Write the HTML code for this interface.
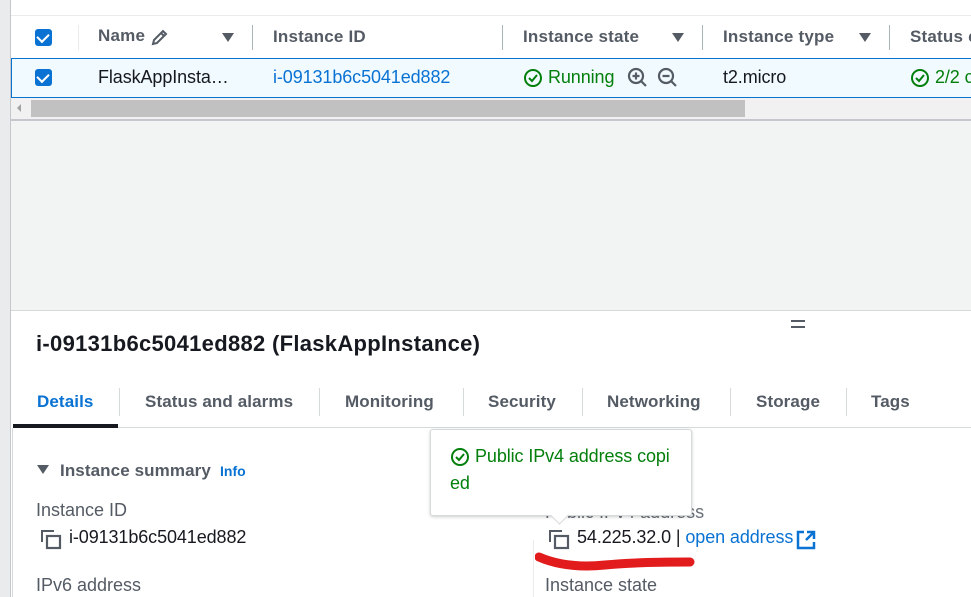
<!DOCTYPE html>
<html><head><style>
*{margin:0;padding:0;box-sizing:border-box}
body{width:971px;height:597px;overflow:hidden;background:#fff;font-family:"Liberation Sans",sans-serif;position:relative;color:#16191f}
.a{position:absolute;white-space:nowrap}
.t{font-size:18px;letter-spacing:-0.1px}
.hd{font-weight:bold;color:#545b64;font-size:17px;letter-spacing:0.2px}
.sep{position:absolute;width:1px;background:#aab7b8}
.cb{position:absolute;width:17px;height:17px;background:#0972d3;border-radius:3px}
.cb:after{content:"";position:absolute;left:4px;top:2px;width:6px;height:9px;border:solid #fff;border-width:0 2.5px 2.5px 0;transform:rotate(45deg)}
.tri{position:absolute;width:0;height:0;border-left:6px solid transparent;border-right:6px solid transparent;border-top:9px solid #545b64}
.tab{position:absolute;top:392px;font-size:17px;font-weight:bold;color:#545b64;letter-spacing:0.1px}
.tsep{position:absolute;top:388px;height:28px;width:1px;background:#d5dbdb}
.lbl{font-size:18px;color:#545b64}
</style></head><body>
<div class="a" style="left:0;top:0;width:10px;height:597px;background:#e9ebed"></div>
<div class="a" style="left:10px;top:0;width:1px;height:597px;background:#c6c6cd"></div>
<div class="a" style="left:11px;top:15px;width:960px;height:1px;background:#e9ebed"></div>
<div class="cb" style="left:35px;top:29px"></div>
<div class="sep" style="left:78px;top:25px;height:25px;background:#e9ebed"></div>
<div class="a hd" style="left:98px;top:26px">Name</div>
<svg class="a" style="left:150px;top:27px" width="20" height="20" viewBox="0 0 20 20"><path d="M3 17l1-4L13 4l3 3-9 9z M11 6l3 3" fill="none" stroke="#545b64" stroke-width="2"/></svg>
<div class="tri" style="left:222px;top:33px"></div>
<div class="sep" style="left:252px;top:25px;height:25px"></div>
<div class="a hd" style="left:273px;top:27px">Instance ID</div>
<div class="sep" style="left:502px;top:25px;height:25px"></div>
<div class="a hd" style="left:523px;top:27px">Instance state</div>
<div class="tri" style="left:672px;top:33px"></div>
<div class="sep" style="left:702px;top:25px;height:25px"></div>
<div class="a hd" style="left:723px;top:27px">Instance type</div>
<div class="tri" style="left:859px;top:33px"></div>
<div class="sep" style="left:889px;top:25px;height:25px"></div>
<div class="a hd" style="left:910px;top:27px">Status c</div>
<div class="a" style="left:11px;top:58px;width:960px;height:40px;background:#f1faff;border:1px solid #0972d3;border-right:none"></div>
<div class="cb" style="left:35px;top:69px"></div>
<div class="a t" style="left:98px;top:67px">FlaskAppInsta…</div>
<div class="a t" style="left:273px;top:67px;color:#0972d3">i-09131b6c5041ed882</div>
<svg class="a" style="left:523px;top:68px" width="20" height="20" viewBox="0 0 20 20"><circle cx="10" cy="10" r="8" fill="none" stroke="#037f0c" stroke-width="2"/><path d="M6 10l3 3 5-6" fill="none" stroke="#037f0c" stroke-width="2"/></svg>
<div class="a t" style="left:548px;top:67px;color:#037f0c">Running</div>
<svg class="a" style="left:627px;top:67px" width="22" height="22" viewBox="0 0 22 22"><circle cx="9" cy="9" r="7" fill="none" stroke="#545b64" stroke-width="2.2"/><path d="M14 14l5 5M9 5.5v7M5.5 9h7" stroke="#545b64" stroke-width="2.2"/></svg>
<svg class="a" style="left:657px;top:67px" width="22" height="22" viewBox="0 0 22 22"><circle cx="9" cy="9" r="7" fill="none" stroke="#545b64" stroke-width="2.2"/><path d="M14 14l5 5M5.5 9h7" stroke="#545b64" stroke-width="2.2"/></svg>
<div class="a t" style="left:723px;top:67px">t2.micro</div>
<svg class="a" style="left:910px;top:68px" width="20" height="20" viewBox="0 0 20 20"><circle cx="10" cy="10" r="8" fill="none" stroke="#037f0c" stroke-width="2"/><path d="M6 10l3 3 5-6" fill="none" stroke="#037f0c" stroke-width="2"/></svg>
<div class="a t" style="left:935px;top:67px;color:#037f0c">2/2 c</div>
<div class="a" style="left:11px;top:98px;width:960px;height:21px;background:#f1f1f1"></div>
<div class="a" style="left:17px;top:104px;width:0;height:0;border-top:4px solid transparent;border-bottom:4px solid transparent;border-right:4px solid #a3a3a3"></div>
<div class="a" style="left:31px;top:100px;width:714px;height:17px;background:#c1c1c1"></div>
<div class="a" style="left:11px;top:119px;width:960px;height:2px;background:#c6c6cd"></div>
<div class="a" style="left:11px;top:121px;width:960px;height:189px;background:#f2f3f3"></div>
<div class="a" style="left:11px;top:310px;width:960px;height:1px;background:#d5dbdb"></div>
<div class="a" style="left:791px;top:320px;width:14px;height:2px;background:#545b64"></div>
<div class="a" style="left:791px;top:326px;width:14px;height:2px;background:#545b64"></div>
<div class="a" style="left:36px;top:331px;font-size:22px;font-weight:bold;letter-spacing:0.3px">i-09131b6c5041ed882 (FlaskAppInstance)</div>
<div class="tab" style="left:37px;color:#0972d3">Details</div>
<div class="tsep" style="left:119px"></div>
<div class="tab" style="left:145px">Status and alarms</div>
<div class="tsep" style="left:319px"></div>
<div class="tab" style="left:345px">Monitoring</div>
<div class="tsep" style="left:463px"></div>
<div class="tab" style="left:488px">Security</div>
<div class="tsep" style="left:582px"></div>
<div class="tab" style="left:607px">Networking</div>
<div class="tsep" style="left:730px"></div>
<div class="tab" style="left:756px">Storage</div>
<div class="tsep" style="left:846px"></div>
<div class="tab" style="left:871px">Tags</div>
<div class="a" style="left:13px;top:427px;width:958px;height:1px;background:#d5dbdb"></div>
<div class="a" style="left:13px;top:424px;width:105px;height:4px;background:#16191f"></div>
<div class="a" style="left:12px;top:428px;width:1px;height:169px;background:#d5dbdb"></div>
<div class="a" style="left:37px;top:465px;width:0;height:0;border-left:6px solid transparent;border-right:6px solid transparent;border-top:9px solid #545b64"></div>
<div class="a" style="left:60px;top:461px;font-size:17px;font-weight:bold;color:#545b64;letter-spacing:0.1px">Instance summary</div>
<div class="a" style="left:220px;top:463px;font-size:14px;font-weight:bold;color:#0972d3">Info</div>
<div class="a lbl" style="left:36px;top:500px">Instance ID</div>
<svg class="a" style="left:41px;top:530px" width="22" height="20" viewBox="0 0 22 20"><path d="M1 12V1h12" fill="none" stroke="#545b64" stroke-width="2"/><rect x="6" y="6" width="13" height="12" fill="none" stroke="#545b64" stroke-width="2.2"/></svg>
<div class="a t" style="left:69px;top:527px">i-09131b6c5041ed882</div>
<div class="a lbl" style="left:36px;top:575px">IPv6 address</div>
<div class="a" style="left:533px;top:540px;width:1px;height:57px;background:#e9ebed"></div>
<div class="a lbl" style="left:545px;top:502px;color:#687078">Public IPv4 address</div>
<svg class="a" style="left:549px;top:530px" width="22" height="20" viewBox="0 0 22 20"><path d="M1 12V1h12" fill="none" stroke="#545b64" stroke-width="2"/><rect x="6" y="6" width="13" height="12" fill="none" stroke="#545b64" stroke-width="2.2"/></svg>
<div class="a t" style="left:577px;top:527px">54.225.32.0 | <span style="color:#0972d3">open address</span></div>
<svg class="a" style="left:796px;top:530px" width="20" height="20" viewBox="0 0 20 20"><path d="M8 2H2v16h16v-6" fill="none" stroke="#0972d3" stroke-width="2.5"/><path d="M11 2h7v7M18 2l-8 8" fill="none" stroke="#0972d3" stroke-width="2.5"/></svg>
<svg class="a" style="left:535px;top:550px" width="165" height="25" viewBox="0 0 165 25"><path d="M4 7C20 14 40 18 70 15S140 12 155 12" fill="none" stroke="#e21c1c" stroke-width="9" stroke-linecap="round"/></svg>
<div class="a lbl" style="left:545px;top:575px">Instance state</div>
<div class="a" style="left:430px;top:429px;width:262px;height:87px;background:#fff;border:1px solid #d5dbdb;border-radius:3px;box-shadow:0 1px 3px rgba(0,0,0,.2)"></div>
<div class="a" style="left:553px;top:509px;width:13px;height:13px;background:#fff;border-right:1px solid #d5dbdb;border-bottom:1px solid #d5dbdb;transform:rotate(45deg)"></div>
<svg class="a" style="left:450px;top:447px" width="20" height="20" viewBox="0 0 20 20"><circle cx="10" cy="10" r="8" fill="none" stroke="#037f0c" stroke-width="2"/><path d="M6 10l3 3 5-6" fill="none" stroke="#037f0c" stroke-width="2"/></svg>
<div class="a t" style="left:475px;top:446px;color:#037f0c">Public IPv4 address copi</div>
<div class="a t" style="left:450px;top:473px;color:#037f0c">ed</div>
</body></html>
